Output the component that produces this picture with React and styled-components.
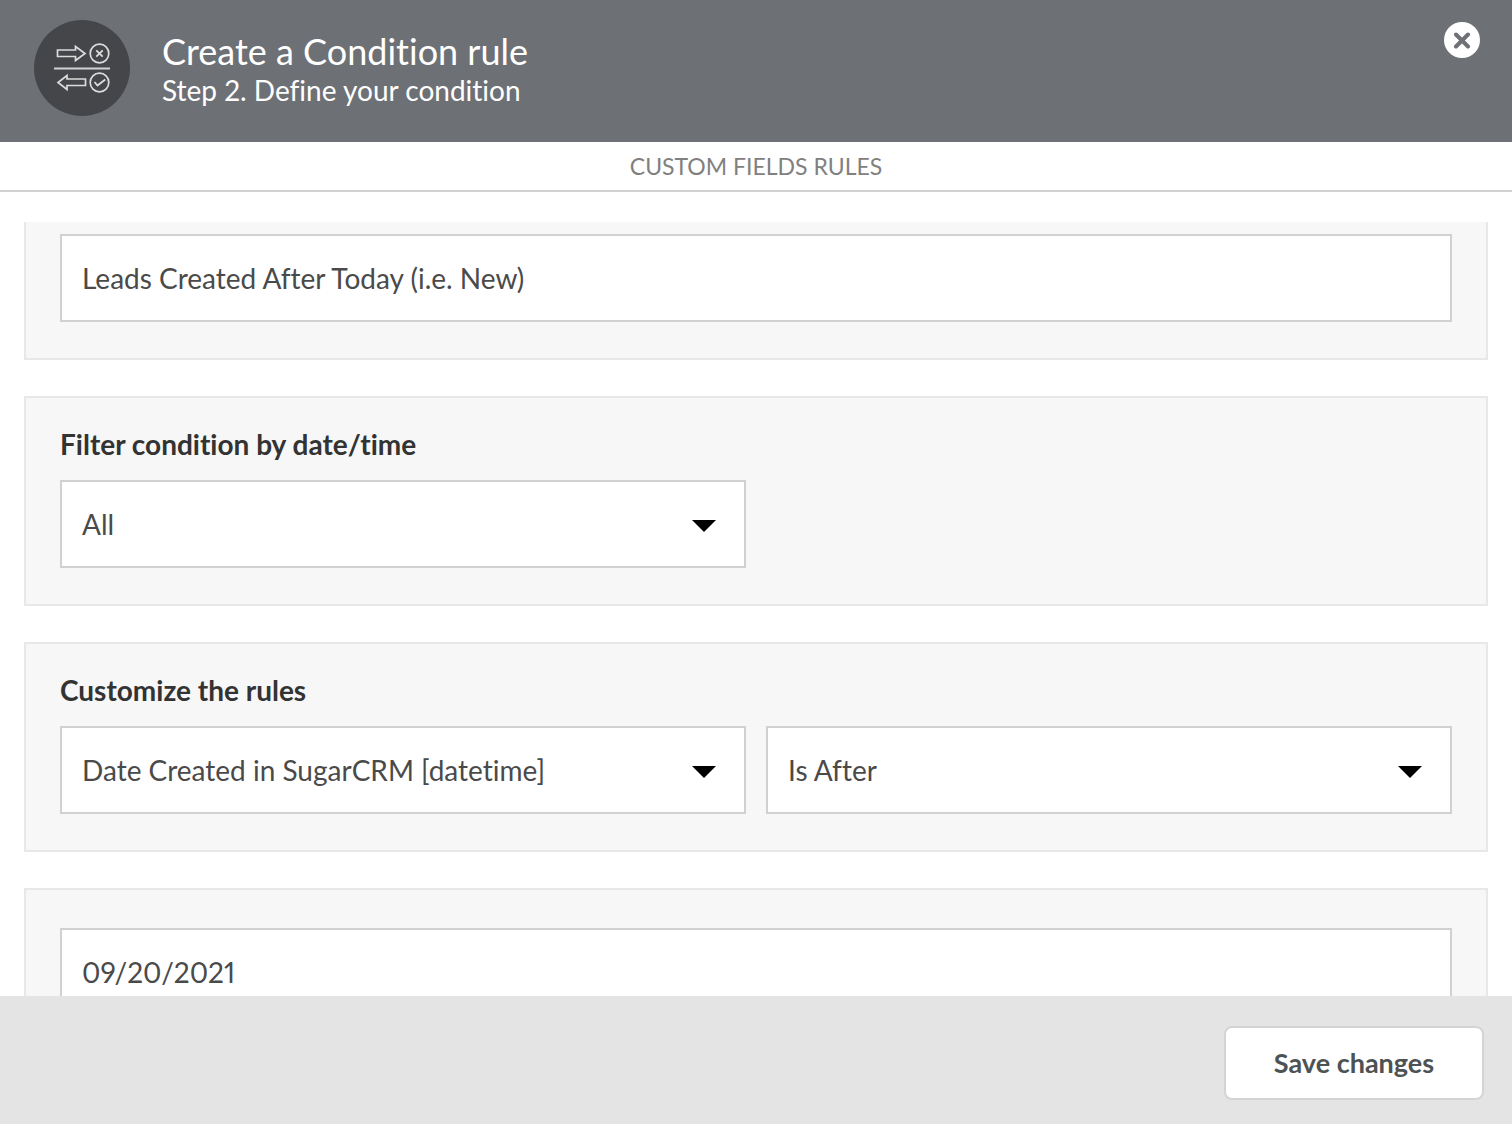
import React from "react";
import styled, { createGlobalStyle } from "styled-components";

const GlobalStyle = createGlobalStyle`
  *, *::before, *::after { box-sizing: border-box; }
  body {
    margin: 0;
    background: #fff;
    color: #4a4a4a;
    font-family: Lato, "Liberation Sans", sans-serif;
    font-size: 28px;
    line-height: 34px;
  }
  button, input, select { font: inherit; }
  body, button, input, select {
    font-variant-ligatures: none;
    font-variant-numeric: proportional-nums;
  }
`;

const Dialog = styled.form`
  display: flex;
  flex-direction: column;
  height: 100vh;
`;

const Header = styled.header`
  display: flex;
  align-items: flex-start;
  gap: 32px;
  padding: 20px 32px 26px 34px;
  background: #6d7075;
  color: #fff;
`;

const Badge = styled.svg`
  flex: none;
  width: 96px;
  height: 96px;
`;

const Titles = styled.div`
  flex: 1;
  padding-top: 9px;
`;

const Title = styled.h1`
  margin: 0;
  font-size: 36px;
  font-weight: 400;
  line-height: 44px;
`;

const Subtitle = styled.p`
  margin: 0;
`;

const CloseButton = styled.button`
  display: grid;
  place-items: center;
  width: 36px;
  height: 36px;
  margin-top: 2px;
  padding: 0;
  border: 0;
  border-radius: 50%;
  background: #fff;
  color: #6d7075;
  cursor: pointer;
`;

const SectionTitle = styled.h2`
  margin: 0;
  padding: 7px 0;
  border-bottom: 2px solid #d1d1d1;
  color: #808080;
  font-size: 23px;
  font-weight: 400;
  text-align: center;
  text-transform: uppercase;
`;

const Content = styled.main`
  display: flex;
  flex: 1;
  flex-direction: column;
  gap: 36px;
  min-height: 0;
  margin-top: 30px;
  padding: 0 24px;
  overflow-y: auto;
  scrollbar-width: none;
`;

const Panel = styled.section`
  flex: none;
  padding: ${({ $top }) => $top}px 34px 36px;
  border: 2px solid #e8e8e8;
  border-top-width: ${({ $flush }) => ($flush ? 0 : 2)}px;
  background: #f7f7f7;
`;

const Label = styled.label`
  display: block;
  margin-bottom: 20px;
  color: #333;
  font-weight: 700;
  line-height: 32px;
`;

const Columns = styled.div`
  display: grid;
  grid-template-columns: 1fr 1fr;
  gap: 20px;
`;

const TextField = styled.input`
  display: block;
  width: 100%;
  height: 88px;
  padding: 0 20px;
  border: 2px solid #d1d1d1;
  border-radius: 0;
  background: #fff;
  color: #4a4a4a;
`;

const SelectBox = styled.div`
  display: grid;
  align-items: center;

  & > * { grid-area: 1 / 1; }
`;

const SelectField = styled(TextField).attrs({ as: "select" })`
  appearance: none;
  padding-right: 70px;
`;

const Arrow = styled.svg`
  justify-self: end;
  width: 24px;
  height: 12px;
  margin: 4px 30px 0 0;
  pointer-events: none;
`;

const Footer = styled.footer`
  display: flex;
  justify-content: flex-end;
  padding: 30px 28px 24px;
  background: #e4e4e4;
`;

const SaveButton = styled.button`
  min-width: 260px;
  height: 74px;
  padding: 0 20px;
  border: 2px solid #d4d4d4;
  border-radius: 8px;
  background: #fff;
  color: #4d5254;
  font-size: 27px;
  font-weight: 700;
  cursor: pointer;
`;

function RuleIcon() {
  return (
    <Badge viewBox="0 0 96 96" fill="none" stroke="#dcdcdc" strokeWidth="1.7" aria-hidden="true">
      <circle cx="48" cy="48" r="48" fill="#454649" stroke="none" />
      <path d="M23.500 30h18v-3.500l9.500 7-9.500 7v-4h-18z" />
      <circle cx="65.500" cy="33.500" r="9.300" />
      <path d="M62.300 30.300l6.400 6.400M68.700 30.300l-6.400 6.400" strokeWidth="1.800" />
      <path d="M20 48.500h56" stroke="#d3d0d4" strokeWidth="2" />
      <path d="M51.500 59h-18.500v-3.500l-9 7 9 7v-4h18.500z" />
      <circle cx="65.500" cy="62.500" r="9.300" />
      <path d="M60.500 62l3 3.500 7.800-6" strokeWidth="1.800" />
    </Badge>
  );
}

function Select({ value, ...props }) {
  return (
    <SelectBox>
      <SelectField defaultValue={value} {...props}>
        <option>{value}</option>
      </SelectField>
      <Arrow viewBox="0 0 24 12" aria-hidden="true">
        <path d="M0 0h24L12 12z" fill="#000" />
      </Arrow>
    </SelectBox>
  );
}

export default function App() {
  return (
    <>
      <GlobalStyle />
      <Dialog onSubmit={(event) => event.preventDefault()}>
        <Header>
          <RuleIcon />
          <Titles>
            <Title>Create a Condition rule</Title>
            <Subtitle>Step 2. Define your condition</Subtitle>
          </Titles>
          <CloseButton type="button" aria-label="Close">
            <svg width="18" height="18" viewBox="0 0 18 18" aria-hidden="true">
              <path d="M3 3.500l12 12M15 3.500l-12 12" stroke="currentColor" strokeWidth="4" strokeLinecap="round" />
            </svg>
          </CloseButton>
        </Header>
        <SectionTitle>Custom fields rules</SectionTitle>
        <Content>
          <Panel $top={12} $flush>
            <TextField aria-label="Name" defaultValue="Leads Created After Today (i.e. New)" />
          </Panel>
          <Panel $top={30}>
            <Label htmlFor="filter">Filter condition by date/time</Label>
            <Columns>
              <Select id="filter" value="All" />
            </Columns>
          </Panel>
          <Panel $top={30}>
            <Label htmlFor="rule-field">Customize the rules</Label>
            <Columns>
              <Select id="rule-field" value="Date Created in SugarCRM [datetime]" />
              <Select aria-label="Operator" value="Is After" />
            </Columns>
          </Panel>
          <Panel $top={38}>
            <TextField aria-label="Date" defaultValue="09/20/2021" />
          </Panel>
        </Content>
        <Footer>
          <SaveButton type="submit">Save changes</SaveButton>
        </Footer>
      </Dialog>
    </>
  );
}
